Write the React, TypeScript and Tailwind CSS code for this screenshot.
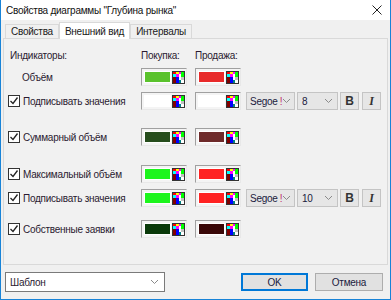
import { ReactNode } from 'react'

const font = { fontFamily: '"Liberation Sans", Arial, sans-serif' }

function Palette() {
  const cells = [
    '#ff0000', '#ffff00', '#ff00ff', '#00ff00',
    '#00ffff', '#ff00ff', '#ffffff', '#00ff00',
    '#800000', '#0000ff', '#ffffff', '#c0c0c0',
    '#800000', '#0000ff', '#008080', '#ffffff',
  ]
  return (
    <div className="grid grid-cols-4 grid-rows-4 w-[13px] h-[13px] bg-[#333] p-px shrink-0">
      {cells.map((c, i) => (
        <div key={i} style={{ backgroundColor: c }} />
      ))}
    </div>
  )
}

function Swatch({ color }: { color: string }) {
  return (
    <div className="w-[46px] h-[18px] flex items-center border-t border-l border-[#a0a0a0] border-b border-r border-b-[#e8e8e8] border-r-[#e8e8e8] bg-[#f4f4f4] shrink-0">
      <div className="ml-[2px] w-[27px] h-[12px] border border-white" style={{ backgroundColor: color }} />
      <div className="ml-auto mr-[1px]">
        <Palette />
      </div>
    </div>
  )
}

function Chevron() {
  return (
    <svg width="9" height="6" viewBox="0 0 9 6" className="shrink-0">
      <path d="M1 1 L4.5 4.5 L8 1" fill="none" stroke="#8a8a8a" strokeWidth="1" />
    </svg>
  )
}

function Check() {
  return (
    <div className="w-[12px] h-[12px] border border-[#333] bg-white flex items-center justify-center shrink-0">
      <svg width="10" height="10" viewBox="0 0 10 10">
        <path d="M1.5 5 L4 7.5 L8.5 1.5" fill="none" stroke="#222" strokeWidth="1.3" />
      </svg>
    </div>
  )
}

function FontControls({ size }: { size: string }) {
  return (
    <div className="flex items-center ml-[5px]">
      <div className="w-[49px] h-[18px] border border-[#c4c4c4] bg-[#e6e6e6] flex items-center pl-[3px] pr-[3px]">
        <span className="text-[#1a1a40]">Segoe</span>
        <span className="text-[#c0306a] ml-[2px]">!</span>
        <span className="ml-auto"><Chevron /></span>
      </div>
      <div className="w-[41px] h-[18px] ml-[2px] border border-[#c4c4c4] bg-[#e6e6e6] flex items-center pl-[4px] pr-[4px] text-[#1a1a40]">
        {size}
        <span className="ml-auto"><Chevron /></span>
      </div>
      <div className="w-[19px] h-[18px] ml-[2px] border border-[#c4c4c4] bg-[#e6e6e6] flex items-center justify-center text-[12px] font-bold text-[#333] tracking-normal">
        B
      </div>
      <div className="w-[19px] h-[18px] ml-[3px] border border-[#c4c4c4] bg-[#e6e6e6] flex items-center justify-center text-[12px] font-bold italic text-[#333] tracking-normal" style={{ fontFamily: '"Liberation Serif", serif' }}>
        I
      </div>
    </div>
  )
}

function Row({
  label,
  checked,
  buy,
  sell,
  fontSize,
  className,
}: {
  label: string
  checked?: boolean
  buy: string
  sell: string
  fontSize?: string
  className?: string
}) {
  return (
    <div className={`flex items-center h-[18px] ${className ?? ''}`}>
      <div className="w-[137px] flex items-center pl-[4px] whitespace-nowrap">
        {checked ? (
          <>
            <Check />
            <span className="ml-[3px] text-[#2a1a30]">{label}</span>
          </>
        ) : (
          <span className="ml-[14px] text-[#2a1a30]">{label}</span>
        )}
      </div>
      <Swatch color={buy} />
      <div className="ml-[8px]">
        <Swatch color={sell} />
      </div>
      {fontSize && <FontControls size={fontSize} />}
    </div>
  )
}

function Tab({ children, active }: { children: ReactNode; active?: boolean }) {
  return active ? (
    <div className="h-[17px] -mb-px px-[5px] flex items-center bg-white border border-b-0 border-[#d9d9d9] relative z-10">
      {children}
    </div>
  ) : (
    <div className="h-[14px] px-[5px] flex items-center border border-b-0 border-[#d9d9d9] bg-[#f0f0f0]">
      {children}
    </div>
  )
}

export default function App() {
  return (
    <div className="w-[391px] h-[300px] bg-[#f0f0f0] border-x border-b border-[#1883d7] flex flex-col text-[#1a1a1a] text-[10px] tracking-[-0.25px]" style={font}>
      <div className="h-[20px] bg-white flex items-center pl-[5px] pr-[6px] text-[#111]">
        <span>Свойства диаграммы "Глубина рынка"</span>
        <svg width="10" height="10" viewBox="0 0 10 10" className="ml-auto mr-[2px]">
          <path d="M0.5 0.5 L9.5 9.5 M9.5 0.5 L0.5 9.5" stroke="#222" strokeWidth="1" />
        </svg>
      </div>

      <div className="flex items-end pl-[4px] mt-[2px] h-[16px]">
        <Tab>Свойства</Tab>
        <Tab active>Внешний вид</Tab>
        <Tab>Интервалы</Tab>
      </div>

      <div className="mx-[2px] h-[227px] border border-[#d9d9d9] bg-[#f1f1f1] flex flex-col">
        <div className="flex items-center h-[14px] mt-[9px] text-[#2a1a30]">
          <span className="w-[137px] pl-[6px]">Индикаторы:</span>
          <span className="w-[54px]">Покупка:</span>
          <span>Продажа:</span>
        </div>
        <Row className="mt-[6px]" label="Объём" buy="#5ac22c" sell="#e82a2a" />
        <Row className="mt-[6px]" label="Подписывать значения" checked buy="#ffffff" sell="#ffffff" fontSize="8" />
        <Row className="mt-[18px]" label="Суммарный объём" checked buy="#264d1c" sell="#6e2a2a" />
        <Row className="mt-[19px]" label="Максимальный объём" checked buy="#1cf51c" sell="#ff2222" />
        <Row className="mt-[6px]" label="Подписывать значения" checked buy="#1cf51c" sell="#ff2222" fontSize="10" />
        <Row className="mt-[13px]" label="Собственные заявки" checked buy="#0a3a0a" sell="#3a0808" />
      </div>

      <div className="flex items-center mt-[7px] px-[4px]">
        <div className="w-[160px] h-[20px] bg-white border border-[#7a7a7a] flex items-center pl-[4px] pr-[5px] text-[#2a1a30]">
          Шаблон
          <span className="ml-auto"><Chevron /></span>
        </div>
        <div className="ml-auto w-[67px] h-[18px] bg-[#e1e1e1] border border-[#0078d7] outline outline-1 outline-[#0078d7] -outline-offset-2 flex items-center justify-center text-[#1a1a40]">
          OK
        </div>
        <div className="ml-[7px] mr-[3px] w-[68px] h-[18px] bg-[#e1e1e1] border border-[#adadad] flex items-center justify-center text-[#1a1a40]">
          Отмена
        </div>
      </div>
    </div>
  )
}
